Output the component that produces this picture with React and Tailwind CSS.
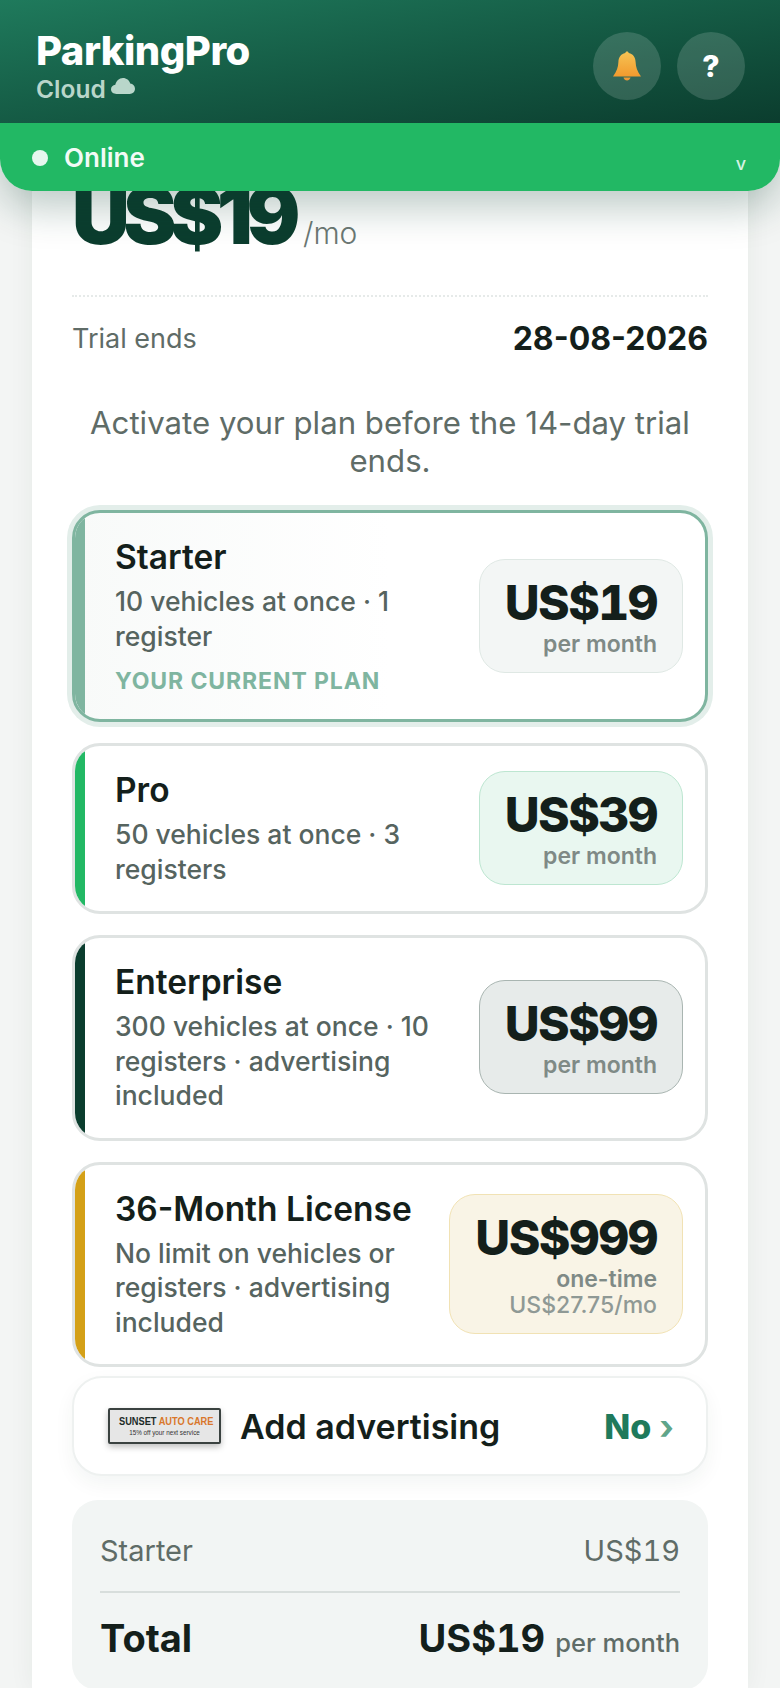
const plans = [
  {
    name: 'Starter',
    desc: '10 vehicles at once · 1 register',
    price: 'US$19',
    accent: 'bg-[#7fb5a0]',
    box: 'bg-[#f3f6f5] border-[#dfe8e4]',
    current: true,
  },
  {
    name: 'Pro',
    desc: '50 vehicles at once · 3 registers',
    price: 'US$39',
    accent: 'bg-[#22b864]',
    box: 'bg-[#e9f7f0] border-[#bde6d1]',
  },
  {
    name: 'Enterprise',
    desc: '300 vehicles at once · 10 registers · advertising included',
    price: 'US$99',
    accent: 'bg-[#0b3d2e]',
    box: 'bg-[#e7ebea] border-[#a9b5b1]',
  },
  {
    name: '36-Month License',
    desc: 'No limit on vehicles or registers · advertising included',
    price: 'US$999',
    accent: 'bg-[#d4a017]',
    box: 'bg-[#f9f4e6] border-[#f1e2b4]',
    oneTime: true,
  },
];

const BellIcon = () => (
  <svg width="30" height="30" viewBox="0 0 30 30">
    <defs>
      <linearGradient id="bell" x1="0" y1="0" x2="0" y2="1">
        <stop offset="0" stopColor="#f6c454" />
        <stop offset="1" stopColor="#f29a2e" />
      </linearGradient>
    </defs>
    <path
      d="M15 0.5c1 0 1.6.7 1.7 1.6C21.4 3 23.4 6.800 23.6 11c.2 5 1.6 9.500 5.400 14.500H1C4.800 20.500 6.200 16 6.400 11 6.600 6.800 8.600 3 13.300 2.100 13.400 1.200 14 .5 15 .5z"
      fill="url(#bell)"
    />
    <path d="M11.500 26.500h7C18 28.500 16.600 29.500 15 29.500s-3-1-3.500-3z" fill="#ee9a35" />
  </svg>
);

const CloudIcon = () => (
  <svg width="24" height="16" viewBox="0 0 24 16" fill="#b9d6ca" className="-mt-[6px]">
    <path d="M5.500 16C2.500 16 0 14.100 0 11.300 0 8.800 1.900 7 4.300 6.800 5.100 3 8.100 0 12 0c3.500 0 6.300 2.300 7.200 5.500 2.800.3 4.800 2.500 4.800 5.300 0 3-2.300 5.200-5.300 5.200z" />
  </svg>
);

const AdThumb = () => (
  <div className="flex h-[36px] w-[113px] shrink-0 flex-col items-center justify-center rounded-[2px] border-2 border-[#3a4240] bg-[#e6e6e6] shadow-[0_3px_6px_rgba(0,0,0,0.25)]">
    <div className="ml-[3px] scale-x-[0.84] font-['Liberation_Sans',sans-serif] text-[11px] leading-[13px] font-bold whitespace-nowrap text-[#1b2a26]">
      SUNSET <span className="text-[#d9772b]">AUTO CARE</span>
    </div>
    <div className="font-['Liberation_Sans',sans-serif] text-[6.300px] leading-[9px] whitespace-nowrap text-[#333]">
      15% off your next service
    </div>
  </div>
);

const PlanCard = ({ plan }) => (
  <div
    className={`flex overflow-hidden rounded-[28px] border-[3px] bg-white ${
      plan.current
        ? 'border-[#7fb5a0] bg-gradient-to-r from-[#f8faf9] to-white to-50% shadow-[0_0_0_5px_#e3eeea]'
        : 'border-[#dfe3e2]'
    }`}
  >
    <div className={`w-[10px] shrink-0 ${plan.accent}`} />
    <div className="flex min-w-0 flex-1 items-center justify-between gap-4 pt-[24px] pr-[22px] pb-[25px] pl-[30px]">
      <div className="min-w-0 flex-1">
        <div className="text-[33.500px] leading-[40px] font-semibold text-[#141f1b]">{plan.name}</div>
        <div className="mt-[7px] text-[26.500px] leading-[34.500px] font-medium text-[#56645f]">{plan.desc}</div>
        {plan.current && (
          <div className="mt-[16px] text-[23px] leading-[25px] font-bold tracking-[0.9px] text-[#7fb5a0]">
            YOUR CURRENT PLAN
          </div>
        )}
      </div>
      <div className={`flex shrink-0 flex-col items-end rounded-[26px] border-[1.500px] py-[15px] pr-[25px] pl-[25px] ${plan.box}`}>
        <div className="text-[48px] leading-[56px] font-extrabold tracking-[-1.600px] text-[#141f1b] tabular-nums">{plan.price}</div>
        {plan.oneTime ? (
          <>
            <div className="text-[23px] leading-[26px] font-semibold text-[#7f8a86]">one-time</div>
            <div className="text-[23px] leading-[26px] font-medium text-[#8f9995]">US$27.75/mo</div>
          </>
        ) : (
          <div className="text-[23px] leading-[26px] font-semibold text-[#7f8a86]">per month</div>
        )}
      </div>
    </div>
  </div>
);

export default function App() {
  return (
    <div className="flex h-[1688px] flex-col overflow-hidden bg-[#f3f5f4] font-['Inter',sans-serif]">
      {/* Cabecera */}
      <header className="relative z-10 shrink-0 rounded-b-[32px] shadow-[0_16px_40px_rgba(11,61,46,0.28)]">
        <div className="flex h-[123px] items-start justify-between bg-gradient-to-br from-[#1f7a5c] to-[#0b3d2e] pr-[35px] pl-[36px]">
          <div className="pt-[29px]">
            <div className="text-[40px] leading-[44px] font-extrabold tracking-[-0.5px] text-white">ParkingPro</div>
            <div className="mt-[2px] flex items-center gap-[5px] text-[24.500px] leading-[28px] font-semibold text-[#b9d6ca]">
              Cloud
              <CloudIcon />
            </div>
          </div>
          <div className="flex gap-[16px] pt-[32px]">
            <button className="flex h-[68px] w-[68px] items-center justify-center rounded-full bg-white/15">
              <BellIcon />
            </button>
            <button className="flex h-[68px] w-[68px] items-center justify-center rounded-full bg-white/15 text-[30px] font-extrabold text-white">
              ?
            </button>
          </div>
        </div>
        <div className="flex h-[68px] items-start rounded-b-[32px] bg-[#22b864] pr-[34px] pl-[32px]">
          <div className="flex items-center gap-[16px] pt-[19px]">
            <span className="h-[16px] w-[16px] rounded-full bg-[#e6f7ee]" />
            <span className="text-[26px] leading-[32px] font-semibold text-[#f2fbf6]">Online</span>
          </div>
          <span className="mt-[31px] ml-auto text-[18px] leading-[20px] font-medium text-[#d5f3e2]">v</span>
        </div>
      </header>

      <main className="mx-[32px] -mt-[40px] flex-1 bg-white px-[40px] shadow-[0_0_24px_rgba(20,50,40,0.06)]">
        <div className="flex items-baseline gap-[9px] pt-[20px] pb-[36px]">
          <span className="text-[80px] leading-[88px] font-black tracking-[-6.500px] text-[#0b3d2e]">US$19</span>
          <span className="text-[30px] font-light text-[#6b7773]">/mo</span>
        </div>

        <div className="border-t-2 border-dotted border-[#e6eae9]" />

        <div className="flex items-center justify-between pt-[23px]">
          <span className="text-[27px] leading-[34px] text-[#5f6c67]">Trial ends</span>
          <span className="text-[32px] leading-[38px] font-bold text-[#141f1b]">28-08-2026</span>
        </div>

        <p className="mt-[47px] mb-[30px] text-center text-[31.200px] leading-[37.500px] text-[#5f6c67]">
          Activate your plan before the 14-day trial ends.
        </p>

        <div className="flex flex-col gap-[21px]">
          {plans.map((plan) => (
            <PlanCard key={plan.name} plan={plan} />
          ))}
        </div>

        <div className="mt-[9px] flex h-[100px] items-center rounded-[30px] border-2 border-[#eef1f0] bg-white pr-[32px] pl-[34px] shadow-[0_8px_20px_rgba(20,50,40,0.05)]">
          <AdThumb />
          <span className="ml-[19px] text-[34px] font-semibold text-[#141f1b]">Add advertising</span>
          <span className="ml-auto text-[34px] font-extrabold text-[#1f7a5c]">No</span>
          <span className="ml-[8px] text-[34px] font-bold text-[#5fa58a]">›</span>
        </div>

        <div className="mt-[24px] rounded-[26px] bg-[#f2f5f4] px-[28px] pt-[33px] pb-[28px]">
          <div className="flex items-center justify-between pb-[22px]">
            <span className="text-[29px] leading-[36px] text-[#5f6c67]">Starter</span>
            <span className="text-[29px] leading-[36px] text-[#5f6c67] tabular-nums">US$19</span>
          </div>
          <div className="border-t-2 border-[#d8dedc]" />
          <div className="flex items-baseline justify-between pt-[21px]">
            <span className="text-[38px] leading-[48px] font-bold text-[#141f1b]">Total</span>
            <span className="flex items-baseline gap-[10px]">
              <span className="text-[38px] leading-[48px] font-bold text-[#141f1b] tabular-nums">US$19</span>
              <span className="text-[25.500px] font-medium text-[#5f6c67]">per month</span>
            </span>
          </div>
        </div>
      </main>
    </div>
  );
}
